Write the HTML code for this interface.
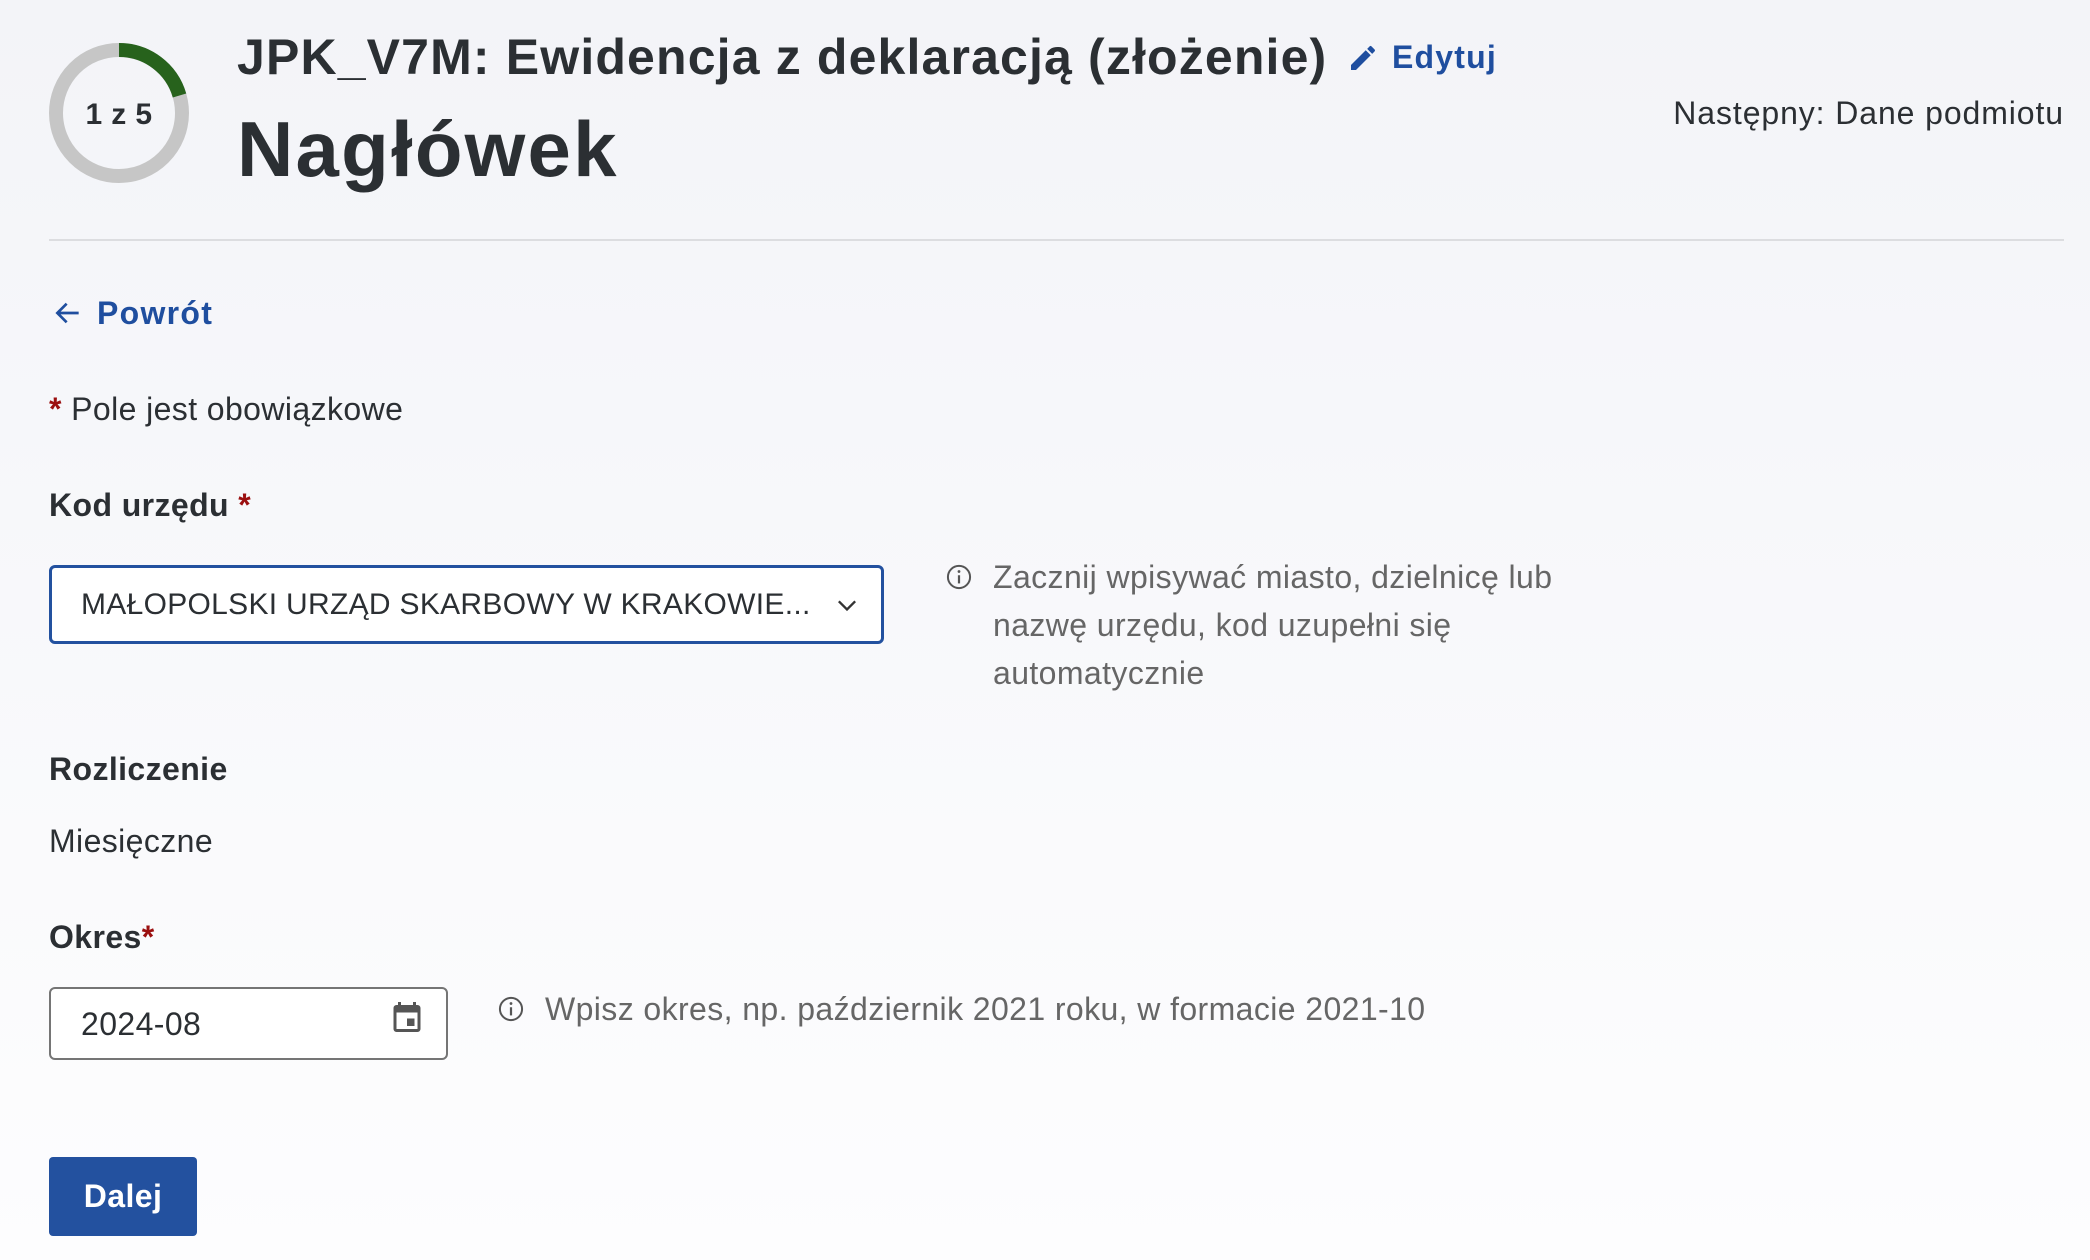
<!DOCTYPE html>
<html><head><meta charset="utf-8"><style>
*{margin:0;padding:0;box-sizing:border-box}
body{width:2090px;height:1260px;overflow:hidden;background:linear-gradient(#f3f4f8,#fdfdfe);font-family:"Liberation Sans",sans-serif;color:#2b2f33;position:relative}
.a{position:absolute;white-space:nowrap;line-height:40px;font-size:32px;letter-spacing:0.4px}
.b{font-weight:bold}
.red{color:#9b1010}
.hint{color:#666}
</style></head><body>
<svg class="a" style="left:49px;top:43px" width="140" height="140" viewBox="0 0 140 140">
<circle cx="70" cy="70" r="63" fill="none" stroke="#c6c6c6" stroke-width="14"/>
<path d="M70 7 A63 63 0 0 1 130.5 52.5" fill="none" stroke="#27621c" stroke-width="14"/>
<text x="70" y="81" text-anchor="middle" font-family="Liberation Sans" font-weight="bold" font-size="30" fill="#2b2f33">1 z 5</text>
</svg>
<div class="a b" style="left:237px;top:30px;font-size:50px;line-height:54px;letter-spacing:1.15px">JPK_V7M: Ewidencja z deklaracją (złożenie)</div>
<svg class="a" style="left:1347px;top:42px" width="32" height="32" viewBox="0 0 24 24"><path fill="#1f4e9f" d="M3 17.25V21h3.75L17.81 9.94l-3.75-3.75L3 17.25zM20.71 7.04a1 1 0 0 0 0-1.41l-2.34-2.34a1 1 0 0 0-1.41 0l-1.83 1.83 3.75 3.75 1.83-1.83z"/></svg>
<div class="a b" style="left:1392px;top:37px;color:#1f4e9f;letter-spacing:1.2px">Edytuj</div>
<div class="a b" style="left:237px;top:106px;font-size:78px;line-height:86px;letter-spacing:2.2px">Nagłówek</div>
<div class="a" style="right:26px;top:93px;letter-spacing:0.9px">Następny: Dane podmiotu</div>
<div class="a" style="left:49px;top:239px;width:2015px;height:2px;background:#dcdde0"></div>
<svg class="a" style="left:52px;top:297px" width="32" height="32" viewBox="0 0 24 24"><path fill="none" stroke="#1f4e9f" stroke-width="2" d="M20 12H5M11 5l-7 7 7 7"/></svg>
<div class="a b" style="left:97px;top:293px;color:#1f4e9f;letter-spacing:1.3px">Powrót</div>
<div class="a" style="left:49px;top:389px"><span class="red b">*</span> Pole jest obowiązkowe</div>
<div class="a b" style="left:49px;top:485px">Kod urzędu <span class="red">*</span></div>
<div class="a" style="left:49px;top:565px;width:835px;height:79px;border:3px solid #23519f;border-radius:6px;background:#fff"></div>
<div class="a" style="left:81px;top:585px;font-size:30px;letter-spacing:0.3px">MAŁOPOLSKI URZĄD SKARBOWY W KRAKOWIE...</div>
<svg class="a" style="left:833px;top:592px" width="28" height="28" viewBox="0 0 24 24"><path fill="none" stroke="#333" stroke-width="2" d="M5 8l7 7 7-7"/></svg>
<svg class="a" style="left:945px;top:563px" width="28" height="28" viewBox="0 0 24 24"><circle cx="12" cy="12" r="9.5" fill="none" stroke="#555" stroke-width="1.7"/><path d="M12 10.5v7" stroke="#555" stroke-width="1.9"/><circle cx="12" cy="7.3" r="1.2" fill="#555"/></svg>
<div class="a hint" style="left:993px;top:553px;line-height:48px">Zacznij wpisywać miasto, dzielnicę lub<br>nazwę urzędu, kod uzupełni się<br>automatycznie</div>
<div class="a b" style="left:49px;top:749px">Rozliczenie</div>
<div class="a" style="left:49px;top:821px">Miesięczne</div>
<div class="a b" style="left:49px;top:917px">Okres<span class="red">*</span></div>
<div class="a" style="left:49px;top:987px;width:399px;height:73px;border:2px solid #757575;border-radius:6px;background:#fff"></div>
<div class="a" style="left:81px;top:1004px">2024-08</div>
<svg class="a" style="left:389px;top:999px" width="36" height="36" viewBox="0 0 24 24"><path fill="#555" d="M19 4h-1V2h-2v2H8V2H6v2H5a2 2 0 0 0-2 2v14a2 2 0 0 0 2 2h14a2 2 0 0 0 2-2V6a2 2 0 0 0-2-2zm0 16H5V9h14v11zm-7-7h5v5h-5z"/></svg>
<svg class="a" style="left:497px;top:995px" width="28" height="28" viewBox="0 0 24 24"><circle cx="12" cy="12" r="9.5" fill="none" stroke="#555" stroke-width="1.7"/><path d="M12 10.5v7" stroke="#555" stroke-width="1.9"/><circle cx="12" cy="7.3" r="1.2" fill="#555"/></svg>
<div class="a hint" style="left:545px;top:989px">Wpisz okres, np. październik 2021 roku, w formacie 2021-10</div>
<div class="a b" style="left:49px;top:1157px;width:148px;height:79px;background:#23519f;border-radius:4px;color:#fff;text-align:center;line-height:79px">Dalej</div>
</body></html>
